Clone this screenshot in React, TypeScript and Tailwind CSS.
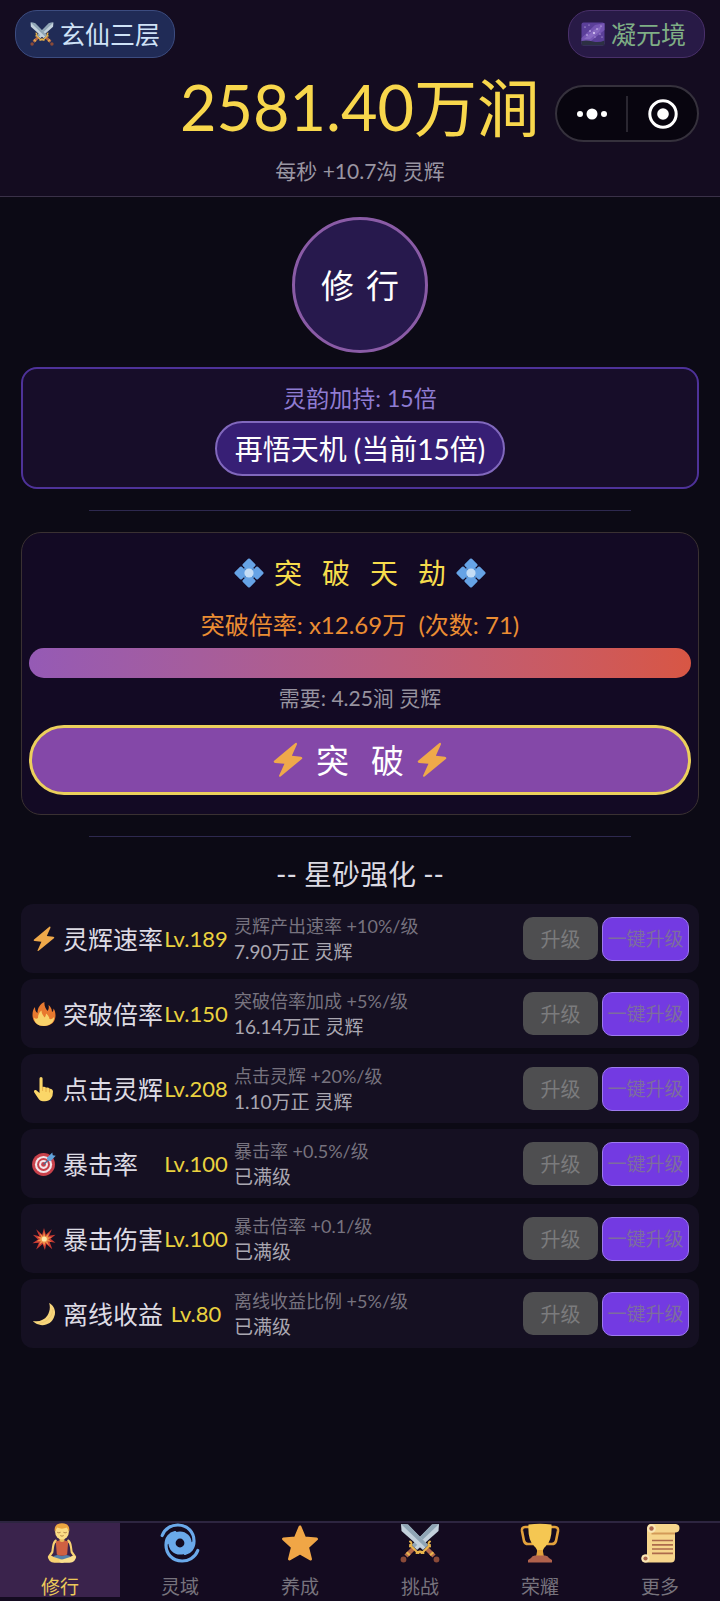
import type { ReactNode } from "react";

type IconProps = { className?: string };

function SwordsIcon({ className }: IconProps) {
  const sword = (
    <>
      <path d="M1 1 L8 1.500 L28 22 L23 27 L1.500 8 Z" fill="#c3d1dc" />
      <path d="M1 1 L8 1.500 L28 22 L25.500 24.500 Z" fill="#8fa5b5" />
      <path d="M26 25 L34 33" stroke="#b5694a" strokeWidth="4.5" />
      <path d="M18.500 30 Q20 27 23.500 30 M30 18.500 Q27 20 30 23.500 M22 30 L30 22" stroke="#eab64c" strokeWidth="2" fill="none" strokeLinecap="round" />
      <path d="M31 30 l1.500 1.500" stroke="#eab64c" strokeWidth="4.500" />
      <circle cx="36.500" cy="36.500" r="2.900" fill="#8a4a38" />
    </>
  );
  return (
    <svg viewBox="0 0 40 40" className={className} aria-hidden="true">
      <g transform="matrix(-1 0 0 1 40 0)">{sword}</g>
      {sword}
    </svg>
  );
}

function GalaxyIcon({ className }: IconProps) {
  return (
    <svg viewBox="0 0 24 24" className={className} aria-hidden="true">
      <rect x="0.500" y="0.500" width="23" height="23" rx="2" fill="#5b3f99" />
      <path d="M0.500 16 L14 3 L23.500 1 V8 L10 19 H0.500 Z" fill="#7656b4" />
      <path d="M3 17 L13 8 L21 4 L18 10 L9 17 Z" fill="#9578cc" opacity="0.600" />
      <path d="M0.500 19 Q6 18 12 19.500 T23.500 18.500 V23.500 H0.500 Z" fill="#2c3043" />
      <g fill="#e9dcff">
        <circle cx="4" cy="5" r="0.600" />
        <circle cx="8" cy="3" r="0.500" />
        <circle cx="9" cy="9" r="0.700" />
        <circle cx="13" cy="11" r="0.900" />
        <circle cx="16" cy="7" r="0.700" />
        <circle cx="20" cy="4" r="0.600" />
        <circle cx="19" cy="12" r="0.600" />
        <circle cx="6" cy="13" r="0.700" />
        <circle cx="14" cy="15" r="0.500" />
        <circle cx="21" cy="15" r="0.500" />
      </g>
    </svg>
  );
}

function DiamondIcon({ className }: IconProps) {
  return (
    <svg viewBox="0 0 30 30" className={className} aria-hidden="true">
      <rect x="10" y="10" width="10" height="10" fill="#4a7fbd" />
      <g fill="#66a3e6">
        <rect x="-5" y="-5" width="10" height="10" rx="1.300" transform="translate(15 7) rotate(45)" />
        <rect x="-5" y="-5" width="10" height="10" rx="1.300" transform="translate(15 23) rotate(45)" />
        <rect x="-5" y="-5" width="10" height="10" rx="1.300" transform="translate(7 15) rotate(45)" />
        <rect x="-5" y="-5" width="10" height="10" rx="1.300" transform="translate(23 15) rotate(45)" />
      </g>
      <circle cx="15" cy="15" r="4.600" fill="#c4dcf5" />
    </svg>
  );
}

function BoltIcon({ className }: IconProps) {
  return (
    <svg viewBox="0 0 96 112" className={className} aria-hidden="true">
      <path
        d="M71 3 L4 59 Q2 64 8 65 L37 68 L20 105 Q20 110 25 107 L92 52 Q94 47 88 46 L60 43 L76 7 Q76 1 71 3 Z"
        fill="#efa94a"
      />
    </svg>
  );
}

function FireIcon({ className }: IconProps) {
  return (
    <svg viewBox="0 0 24 26" className={className} aria-hidden="true">
      <path
        d="M12 25 C4.500 25 0.500 20 0.500 14 C0.500 11 1 8 3 6 C3 9 3.500 11 5.500 12 C5.500 7 8 3 12.500 1 C12 5 13.500 7 15.500 10 C17 8 17 6 16.500 4 C18.500 5.500 20 8 20 11 C21.200 10.500 21.500 9 21.500 7.500 C23 9.500 23.500 12 23.500 14.500 C23.500 20.500 19.500 25 12 25 Z"
        fill="#e8792f"
      />
      <path
        d="M12 25 C6 25 2 21.500 2 16.500 C3.500 18 4.500 18 6 17 C6 14 7 11.500 9.500 9.500 C9.500 12.500 11 14 12.500 16.500 C13.500 15.500 14 14 14 12.500 C16 14 17 15.500 17.500 18 C19.500 18.500 21 17.500 22 16 C22.500 21 18 25 12 25 Z"
        fill="#f8d26a"
      />
    </svg>
  );
}

function PointUpIcon({ className }: IconProps) {
  return (
    <svg viewBox="0 0 24 26" className={className} aria-hidden="true">
      <path
        d="M7.500 2.600 Q7.500 1 9 1 Q10.600 1 10.600 2.600 V11 Q13 10.500 14 11.800 Q16.500 11 17.500 12.800 Q20.500 12.500 21 15.500 Q21 20 19 22.500 Q17 25.300 13 25.300 H11 Q8 25.300 6 22 L2 16 Q1.500 13.500 4 14 L7.500 17 Z"
        fill="#fbd668"
      />
      <path d="M10.600 11 V14.500 M14 12 V15.500 M17.500 13 V16" stroke="#dfa23f" strokeWidth="0.800" strokeLinecap="round" />
    </svg>
  );
}

function TargetIcon({ className }: IconProps) {
  return (
    <svg viewBox="0 0 26 26" className={className} aria-hidden="true">
      <circle cx="12.500" cy="13.500" r="12.400" fill="#c8414b" />
      <circle cx="12.500" cy="13.500" r="9.300" fill="#f3e6ea" />
      <circle cx="12.500" cy="13.500" r="7" fill="#c8414b" />
      <circle cx="12.500" cy="13.500" r="4.800" fill="#f3e6ea" />
      <circle cx="12.500" cy="13.500" r="2.600" fill="#c8414b" />
      <path d="M12.500 13.500 L20 6.500" stroke="#4a6d94" strokeWidth="1.400" />
      <path d="M16 6.500 L22 0.500 L22.500 3.500 L25.700 4 L20 10 L17 9 Z" fill="#62a3dc" />
    </svg>
  );
}

function BoomIcon({ className }: IconProps) {
  return (
    <svg viewBox="0 0 26 26" className={className} aria-hidden="true">
      <path
        d="M13 1 L15 8.500 L21.500 2.500 L18.500 9.500 L25.500 8.500 L20 12.800 L25.500 17 L19 16 L22 24 L15.500 18.500 L14 25 L11.500 18.500 L4.500 24.500 L7.500 17 L0.500 17.500 L6.500 13.500 L1 8.500 L8 10 L4.500 2.500 L11 8.500 Z"
        fill="#c93a33"
      />
      <path
        d="M13 5 L14.500 10.500 L18.500 6.500 L17 11 L21.500 11 L17.500 13.300 L21 16 L16.500 15.500 L18.500 20 L14.500 16.500 L13.300 20.500 L11.500 16.500 L7.500 19.500 L9.500 15.500 L5 15.500 L9 13 L5.500 10.500 L10 11 L8.500 7 L12 10 Z"
        fill="#f0964a"
      />
      <circle cx="13.300" cy="13" r="2.800" fill="#fde6a8" />
    </svg>
  );
}

function MoonIcon({ className }: IconProps) {
  return (
    <svg viewBox="0 0 26 26" className={className} aria-hidden="true">
      <path d="M18.500 1 C24 4 26.500 10 24 16 C22 23 14 26.500 7.500 24.500 C4.500 23.600 2 22 1 20.500 C7 22 13 20 16.500 15 C19.500 10.500 20 5 18.500 1 Z" fill="#f7d67c" />
      <path d="M22.500 8 C22.500 15 17 22 8 23" stroke="#efc76c" strokeWidth="1" fill="none" strokeLinecap="round" />
    </svg>
  );
}

function LotusIcon({ className }: IconProps) {
  return (
    <svg viewBox="-6 0 52 40" className={className} aria-hidden="true">
      <g transform="translate(7.500 0) scale(0.690 1)">
        <path d="M12 18 Q9 19 8 24 L7 29 L2 34 M30 18 Q33 19 34 24 L35 29 L40 34" stroke="#f7d272" strokeWidth="3" fill="none" strokeLinecap="round" strokeLinejoin="round" />
        <path d="M6 35 Q12 30 21 33 Q30 30 36 35 L31 38 H11 Z" fill="#5480a8" />
        <path d="M1 34 Q4 31.500 9 34 L25 37.500 Q25 39.800 20 39.800 H10 Q1 39 1 34 Z" fill="#f7d272" />
        <path d="M41 34 Q38 31.500 33 34 L17 37.500 Q17 39.800 22 39.800 H32 Q41 39 41 34 Z" fill="#fbdf8e" />
        <path d="M12 18.500 Q17 17 21 17.500 Q25 17 30 18.500 L28.500 31.500 Q21 34 13.500 31.500 Z" fill="#cf6142" />
        <path d="M17.500 13 H24.500 V18 Q21 20 17.500 18 Z" fill="#e9b95b" />
        <ellipse cx="21" cy="8.800" rx="10" ry="7.600" fill="#fbdc85" />
        <path d="M10.500 8.500 Q9 0.300 21 0.300 Q33 0.300 31.500 8.500 Q29.500 6.500 28 4.500 Q21 6.800 14 4.500 Q12.500 6.500 10.500 8.500 Z" fill="#eba540" />
        <path d="M14.500 9.500 q2 1 4 0 M23.500 9.500 q2 1 4 0 M19 12.800 q2 1 4 0" stroke="#a06a35" strokeWidth="0.900" fill="none" strokeLinecap="round" />
      </g>
    </svg>
  );
}

function SpiralIcon({ className }: IconProps) {
  return (
    <svg viewBox="0 0 40 40" className={className} aria-hidden="true">
      <g stroke="#6aa9ea" strokeWidth="3.200" fill="none" strokeLinecap="round">
        <path d="M2.200 12.500 C5 5 12 1.900 18 2 C28 2.300 34 9.500 34 18 C34 25 30 29.500 25 30.500" />
        <path d="M37.800 27.500 C35 35 28 38.100 22 38 C12 37.700 6 30.500 6 22 C6 15 10 10.500 15 9.500" />
      </g>
      <path d="M34 18 C34 26 28 31 21 31 L25 22 Z M6 22 C6 14 12 9 19 9 L15 18 Z" fill="#6aa9ea" />
      <circle cx="20" cy="20" r="4.300" fill="#140b20" />
      <circle cx="20" cy="20" r="8" stroke="#6aa9ea" strokeWidth="7.200" fill="none" />
    </svg>
  );
}

function StarIcon({ className }: IconProps) {
  return (
    <svg viewBox="0 0 40 40" className={className} aria-hidden="true">
      <path
        d="M20 4 L24.600 15 L36.500 16 L27.500 24.200 L30.500 36 L20 30 L9.500 36 L12.500 24.200 L3.500 16 L15.400 15 Z"
        fill="#f0a646"
        stroke="#f0a646"
        strokeWidth="3"
        strokeLinejoin="round"
      />
    </svg>
  );
}

function TrophyIcon({ className }: IconProps) {
  return (
    <svg viewBox="0 0 40 40" className={className} aria-hidden="true">
      <path d="M10 4 H5 Q1.500 4 2 8 L4 18 Q5 21 8 21 H13 M30 4 H35 Q38.500 4 38 8 L36 18 Q35 21 32 21 H27" stroke="#e3a23c" strokeWidth="2.600" fill="none" />
      <path d="M8.500 1.500 Q20 0 31.500 1.500 Q32.500 17 26 23 Q22.500 26 22.500 30 L23.500 34 H16.500 L17.500 30 Q17.500 26 14 23 Q7.500 17 8.500 1.500 Z" fill="#f5c752" />
      <path d="M17.300 27 H22.700 L24 34 H16 Z" fill="#e3a23c" />
      <path d="M11 35 Q12 32.500 15 32.500 H25 Q28 32.500 29 35 L32 37 V39.500 H8 V37 Z" fill="#b1624c" />
    </svg>
  );
}

function ScrollIcon({ className }: IconProps) {
  return (
    <svg viewBox="0 0 40 40" className={className} aria-hidden="true">
      <path d="M10 1 H36 Q39.500 1.500 39.500 5 Q39.500 9 36 9.500 H35 V35 Q35 39.500 31 39.500 H5 Q1.500 39 1.500 35.500 Q1.500 31 7 31.500 V6 Q7 2 10 1 Z" fill="#f6d58c" />
      <path d="M11.500 9.500 H35 V11.500 H11.500 Z" fill="#d39a58" />
      <circle cx="11.500" cy="5.500" r="4.300" fill="#fae6b4" />
      <circle cx="11.500" cy="5.500" r="2.200" fill="#a9644a" />
      <circle cx="5.500" cy="35.500" r="4" fill="#fae6b4" />
      <circle cx="5.500" cy="35.500" r="2.100" fill="#a9644a" />
      <path d="M12 17.500 H33 M12 21.800 H33 M12 26 H33 M12 30.300 H33" stroke="#ad6a4c" strokeWidth="1.700" />
    </svg>
  );
}

const upgrades: { icon: ReactNode; name: string; level: string; desc: string; cost: string }[] = [
  { icon: <BoltIcon className="h-[26px] w-6" />, name: "灵辉速率", level: "Lv.189", desc: "灵辉产出速率 +10%/级", cost: "7.90万正 灵辉" },
  { icon: <FireIcon className="h-[26px] w-6" />, name: "突破倍率", level: "Lv.150", desc: "突破倍率加成 +5%/级", cost: "16.14万正 灵辉" },
  { icon: <PointUpIcon className="h-[26px] w-6" />, name: "点击灵辉", level: "Lv.208", desc: "点击灵辉 +20%/级", cost: "1.10万正 灵辉" },
  { icon: <TargetIcon className="h-[26px] w-6" />, name: "暴击率", level: "Lv.100", desc: "暴击率 +0.5%/级", cost: "已满级" },
  { icon: <BoomIcon className="h-[26px] w-6" />, name: "暴击伤害", level: "Lv.100", desc: "暴击倍率 +0.1/级", cost: "已满级" },
  { icon: <MoonIcon className="h-[26px] w-6" />, name: "离线收益", level: "Lv.80", desc: "离线收益比例 +5%/级", cost: "已满级" },
];

const tabs: { icon: ReactNode; label: string }[] = [
  { icon: <LotusIcon className="h-10 w-[52px]" />, label: "修行" },
  { icon: <SpiralIcon className="size-10" />, label: "灵域" },
  { icon: <StarIcon className="size-10" />, label: "养成" },
  { icon: <SwordsIcon className="size-10" />, label: "挑战" },
  { icon: <TrophyIcon className="size-10" />, label: "荣耀" },
  { icon: <ScrollIcon className="size-10" />, label: "更多" },
];

function Divider() {
  return <hr className="my-[21px] w-4/5 self-center border-0 border-t border-[#2e294f]" />;
}

function Header() {
  return (
    <header className="relative border-b border-[#3a3148] bg-[#140c20] pt-[10px] pb-[10px] text-center">
      <div className="flex justify-between px-[15px]">
        <button type="button" className="flex h-12 items-center gap-1.5 rounded-[22px] border border-[#3c4c80] bg-[#202b56] px-3.5 text-[25px] leading-[30px] text-[#cfe2f7]">
          <SwordsIcon className="size-6" />
          玄仙三层
        </button>
        <button type="button" className="flex h-12 items-center gap-1.5 rounded-[22px] border border-[#49306a] bg-[#281a46] pr-[18px] pl-3 text-[25px] leading-[30px] text-[#7fae85]">
          <GalaxyIcon className="size-6" />
          凝元境
        </button>
      </div>
      <div className="text-[63px] leading-[98px] text-[#f8d74c]">2581.40万涧</div>
      <div className="text-[21px] leading-[30px] text-[#9a96a2]">每秒 +10.7沟 灵辉</div>
      <div className="absolute top-[85px] right-[21px] flex h-[57px] w-[144px] items-center rounded-full border-2 border-[#35313c] bg-[#08050f]">
        <button type="button" aria-label="更多操作" className="flex flex-1 items-center justify-center">
          <svg viewBox="0 0 32 12" className="h-3 w-8" fill="#ffffff" aria-hidden="true">
            <circle cx="4" cy="6" r="3" />
            <circle cx="16" cy="6" r="5.500" />
            <circle cx="28" cy="6" r="3" />
          </svg>
        </button>
        <span className="h-9 w-0.5 bg-[#2a2731]" />
        <button type="button" aria-label="关闭" className="flex flex-1 items-center justify-center">
          <svg viewBox="0 0 30 30" className="size-[30px]" aria-hidden="true">
            <circle cx="15" cy="15" r="13.200" fill="none" stroke="#ffffff" strokeWidth="3" />
            <circle cx="15" cy="15" r="5.800" fill="#ffffff" />
          </svg>
        </button>
      </div>
    </header>
  );
}

export default function App() {
  return (
    <div className="flex min-h-screen flex-col bg-[#0c0a15] font-['Lato','Noto_Sans_CJK_SC',sans-serif]">
      <Header />
      <main className="flex flex-1 flex-col px-[21px] pt-5 pb-8">
        <button type="button" className="flex size-[136px] items-center justify-center gap-3 self-center rounded-full border-[3px] border-[#8a5ba6] bg-[#27194d] text-[33px] leading-10 text-white">
          <span>修</span>
          <span>行</span>
        </button>

        <section className="mt-3.5 flex flex-col items-center gap-2 rounded-2xl border-2 border-[#4e3299] bg-[#170d29] pt-3.5 pb-[11px]">
          <p className="text-[23px] leading-[30px] text-[#8f7cd2]">灵韵加持: 15倍</p>
          <button type="button" className="h-[55px] rounded-full border-2 border-[#8168bd] bg-[#371f75] px-[18px] text-[28px] leading-10 text-white">
            再悟天机 (当前15倍)
          </button>
        </section>

        <Divider />

        <section className="flex flex-col rounded-[20px] border border-[#3a3132] bg-[#130a24] px-[7px] pt-5 pb-[19px] text-center">
          <h2 className="flex items-center justify-center gap-[10px] text-[28px] leading-10 text-[#f6dc4c]">
            <DiamondIcon className="size-[30px]" />
            <span className="flex gap-5">
              <span>突</span>
              <span>破</span>
              <span>天</span>
              <span>劫</span>
            </span>
            <DiamondIcon className="size-[30px]" />
          </h2>
          <p className="mt-[17px] text-[24px] leading-[30px] whitespace-pre text-[#eb8d33]">突破倍率: x12.69万  (次数: 71)</p>
          <div
            role="progressbar"
            aria-label="突破进度"
            aria-valuenow={100}
            aria-valuemin={0}
            aria-valuemax={100}
            className="mt-2 h-[30px] rounded-full bg-linear-to-r from-[#955ab5] to-[#d85644]"
          />
          <p className="mt-[5px] text-[21px] leading-[30px] text-[#96929f]">需要: 4.25涧 灵辉</p>
          <button type="button" className="mt-3 flex h-[70px] items-center justify-center gap-3 rounded-full border-[3px] border-[#ecd05c] bg-[#8448a8] text-[33px] leading-10 text-white">
            <BoltIcon className="h-9 w-8" />
            <span className="flex gap-[22px]">
              <span>突</span>
              <span>破</span>
            </span>
            <BoltIcon className="h-9 w-8" />
          </button>
        </section>

        <Divider />

        <h2 className="text-center text-[28px] leading-8 text-[#dcdae2]">-- 星砂强化 --</h2>

        <ul className="mt-3.5 flex flex-col gap-1.5">
          {upgrades.map((item) => (
            <li key={item.name} className="flex h-[69px] items-center rounded-xl bg-[#151022] pr-[10px] pl-[11px]">
              {item.icon}
              <span className="ml-[7px] w-[100px] text-[25px] leading-[30px] whitespace-nowrap text-[#dddbe4]">{item.name}</span>
              <span className="w-[66px] text-center text-[22px] leading-[30px] text-[#ead23f]">{item.level}</span>
              <div className="ml-[5px] flex-1">
                <p className="text-[18px] leading-[26px] text-[#77737f]">{item.desc}</p>
                <p className="text-[19px] leading-[26px] text-[#aaa7b1]">{item.cost}</p>
              </div>
              <button type="button" disabled className="h-[43px] w-[75px] rounded-[10px] bg-[#4e4e50] text-[20px] leading-[30px] text-[#7b7b7d]">
                升级
              </button>
              <button type="button" disabled className="ml-1 h-11 w-[87px] rounded-[10px] border border-[#9d7aee] bg-[#733ae2] text-[19px] leading-[30px] whitespace-nowrap text-[#7d6d9e]">
                一键升级
              </button>
            </li>
          ))}
        </ul>
      </main>

      <nav className="sticky bottom-0 grid h-20 grid-cols-6 items-start border-t-2 border-[#2d2540] bg-[#140b20]">
        {tabs.map((tab, index) => (
          <button
            key={tab.label}
            type="button"
            className={
              index === 0
                ? "flex h-[74px] flex-col items-center gap-3.5 bg-[#3a234c] text-[19px] leading-5 text-[#ecc95a]"
                : "flex h-[74px] flex-col items-center gap-3.5 text-[19px] leading-5 text-[#77737d]"
            }
          >
            {tab.icon}
            {tab.label}
          </button>
        ))}
      </nav>
    </div>
  );
}
